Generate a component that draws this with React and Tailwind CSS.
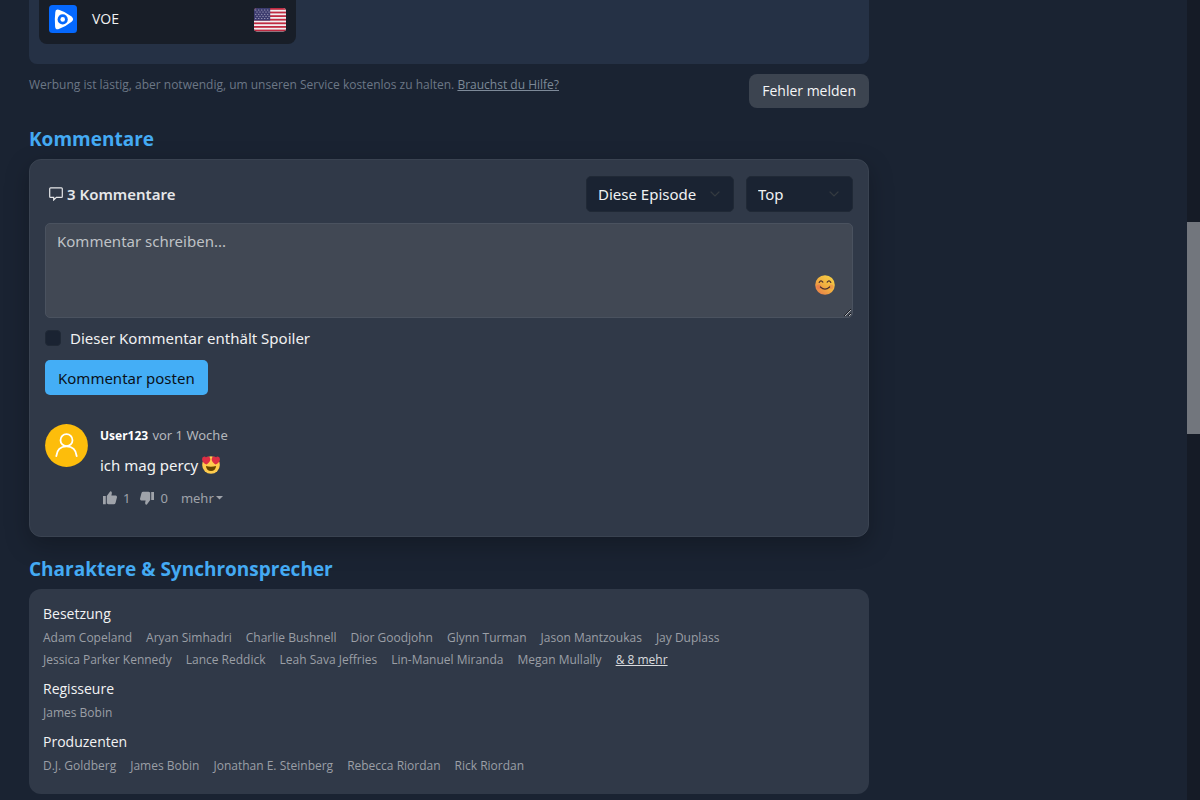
import React from "react";

function VoeLogo() {
  return (
    <svg className="size-7 shrink-0" viewBox="0 0 28 28" aria-hidden="true">
      <rect width="28" height="28" rx="3.5" fill="#0568fd" />
      <path
        d="M6.3 7.2Q6.4 3.6 9.8 4.8Q16.5 6.8 22.6 11.4Q25.6 14.2 22.6 16.8Q16.5 21.8 9.8 24.1Q6.4 25 6.1 21.4Q5.4 14.3 6.3 7.2Z"
        fill="#fff"
      />
      <circle cx="13.7" cy="14.4" r="5.1" fill="#0568fd" />
      <circle cx="13.7" cy="14.4" r="2.3" fill="#fff" />
    </svg>
  );
}

function UsFlag() {
  const stripes = [0, 2, 4, 6, 8, 10, 12];
  const stars = [];
  for (let row = 0; row < 5; row++) {
    for (let col = 0; col < 5; col++) {
      stars.push([1.8 + col * 3 + (row % 2) * 1.2, 1.7 + row * 2.1]);
    }
  }
  return (
    <svg className="h-6 w-8 shrink-0" viewBox="0 0 32 24" role="img" aria-label="Englisch">
      <defs>
        <clipPath id="flag-clip">
          <rect width="32" height="23.4" rx="3" />
        </clipPath>
      </defs>
      <g clipPath="url(#flag-clip)">
        <rect width="32" height="24" fill="#f1eef0" />
        {stripes.map((i) => (
          <rect key={i} y={i * 1.8} width="32" height="1.8" fill="#bf2a41" />
        ))}
        <rect width="16.2" height="12.6" fill="#3c3b6e" />
        {stars.map(([x, y], i) => (
          <circle key={i} cx={x} cy={y + 0.3} r="0.5" fill="#d8d8e6" />
        ))}
      </g>
    </svg>
  );
}

function SmileEmoji() {
  return (
    <svg className="size-5" viewBox="0 0 20 20" aria-hidden="true">
      <defs>
        <linearGradient id="smile" x1="0.9" y1="0.1" x2="0.2" y2="1">
          <stop offset="0" stopColor="#f6cf45" />
          <stop offset="0.5" stopColor="#f1b040" />
          <stop offset="1" stopColor="#e87f4a" />
        </linearGradient>
      </defs>
      <circle cx="10" cy="10" r="9.8" fill="url(#smile)" />
      <circle cx="3.8" cy="11.8" r="2.4" fill="#e8644f" opacity="0.45" />
      <circle cx="16.2" cy="11.8" r="2.4" fill="#e8644f" opacity="0.35" />
      <path
        d="M4.2 7.4Q6 4.6 7.8 7.2M12.2 7.2Q14 4.6 15.8 7.4M5.4 12Q10 16.4 14.6 12"
        fill="none"
        stroke="#4b3030"
        strokeWidth="1.2"
        strokeLinecap="round"
      />
    </svg>
  );
}

function HeartEyesEmoji() {
  return (
    <svg className="size-[18px]" viewBox="0 0 18 18" role="img" aria-label="Herzaugen">
      <circle cx="9" cy="9" r="8.8" fill="#ffcc4d" />
      <path d="M3.9 10Q9 11.4 14.1 10Q13.5 15 9 15Q4.5 15 3.9 10Z" fill="#664500" />
      <path
        d="M8.2 2.6A2.3 2.3 0 0 0 4.1 1.4A2.3 2.3 0 0 0 .1 2.9C-.3 5.4 2 7.5 4.5 8.4C6.6 7 8.9 4.8 8.2 2.6ZM9.8 2.6A2.3 2.3 0 0 1 13.9 1.4A2.3 2.3 0 0 1 17.9 2.9C18.3 5.4 16 7.5 13.5 8.4C11.4 7 9.1 4.8 9.8 2.6Z"
        fill="#dd2e44"
      />
    </svg>
  );
}

function Thumb({ down }) {
  return (
    <svg className="size-[14px]" viewBox="0 0 14 14" aria-hidden="true" fill="#9fa3aa">
      {down ? (
        <path d="M11.2 1H14V9H11.2ZM10.2 1.4V9L6.9 13.6Q5.2 14.1 5.1 12.1L5.6 9.4H1.2Q-.1 9.2 0 7.7L1.5 1.9Q1.8.7 3.2.7H8.6Z" />
      ) : (
        <path d="M0 5H2.8V13.3H0ZM3.8 12.6V5L7.1.4Q8.8-.1 8.9 1.9L8.4 4.6H12.8Q14.1 4.8 14 6.3L12.5 12.1Q12.2 13.3 10.8 13.3H5.4Z" />
      )}
    </svg>
  );
}

function Dropdown({ id, label, option, width }) {
  return (
    <div className={"grid items-center " + width}>
      <label htmlFor={id} className="sr-only">
        {label}
      </label>
      <select
        id={id}
        className="col-start-1 row-start-1 h-9 w-full appearance-none rounded-[5px] border border-[#202936] bg-[#1a2332] px-[11px] text-[15px] leading-6 text-[#f0f1f2]"
      >
        <option>{option}</option>
      </select>
      <svg
        className="pointer-events-none col-start-1 row-start-1 mr-[14px] size-[10px] justify-self-end"
        viewBox="0 0 10 10"
        aria-hidden="true"
      >
        <path d="M1 3L5 7L9 3" fill="none" stroke="#343a40" strokeWidth="1.2" strokeLinecap="round" />
      </svg>
    </div>
  );
}

const credits = [
  {
    title: "Besetzung",
    people: [
      "Adam Copeland",
      "Aryan Simhadri",
      "Charlie Bushnell",
      "Dior Goodjohn",
      "Glynn Turman",
      "Jason Mantzoukas",
      "Jay Duplass",
      "Jessica Parker Kennedy",
      "Lance Reddick",
      "Leah Sava Jeffries",
      "Lin-Manuel Miranda",
      "Megan Mullally",
    ],
    more: "& 8 mehr",
  },
  { title: "Regisseure", people: ["James Bobin"] },
  {
    title: "Produzenten",
    people: ["D.J. Goldberg", "James Bobin", "Jonathan E. Steinberg", "Rebecca Riordan", "Rick Riordan"],
  },
];

function Comments() {
  return (
    <section>
      <h2 className="mt-[15px] text-[19px] leading-8 font-bold text-[#44aaf3]">Kommentare</h2>
      <div className="mt-1 rounded-xl border border-[#3a4351] bg-[#303948] px-[15px] pt-4 pb-7 font-['Noto_Sans',sans-serif] shadow-[0_8px_24px_rgba(0,0,0,0.25)]">
        <div className="flex items-center gap-3">
          <h3 className="ml-1 flex grow items-center gap-1 text-[15px] leading-6 font-semibold text-[#e6e7e9]">
            <svg className="size-[14px]" viewBox="0 0 14 14" aria-hidden="true">
              <path
                d="M1.6.8H12.4Q13.3.8 13.3 1.7V9.5Q13.3 10.4 12.4 10.4H7.4L4.7 13V10.4H1.6Q.7 10.4.7 9.5V1.7Q.7.8 1.6.8Z"
                fill="none"
                stroke="#e6e7e9"
                strokeWidth="1.2"
              />
            </svg>
            3 Kommentare
          </h3>
          <Dropdown id="scope" label="Bereich" option="Diese Episode" width="w-[148px]" />
          <Dropdown id="sort" label="Sortierung" option="Top" width="w-[107px]" />
        </div>
        <form onSubmit={(e) => e.preventDefault()}>
          <div className="relative mt-[11px]">
            <label htmlFor="comment" className="sr-only">
              Kommentar
            </label>
            <textarea
              id="comment"
              placeholder="Kommentar schreiben..."
              className="block h-[95px] w-full resize-y rounded-[5px] border border-[#4a525f] bg-[#414854] px-[11px] py-[5px] text-[15px] leading-6 text-white placeholder:text-[#bfc2c6]"
            />
            <button type="button" aria-label="Emoji" className="absolute right-[18px] bottom-[23px]">
              <SmileEmoji />
            </button>
          </div>
          <div className="mt-2 flex items-center gap-[9px]">
            <input
              id="spoiler"
              type="checkbox"
              className="size-4 appearance-none rounded-[4px] border border-[#202936] bg-[#1a2332]"
            />
            <label htmlFor="spoiler" className="text-[15px] leading-6 text-[#f0f1f2]">
              Dieser Kommentar enthält Spoiler
            </label>
          </div>
          <button
            type="submit"
            className="mt-[10px] block h-[35px] rounded-[5px] bg-[#44aef6] px-[13px] text-[15px] leading-6 text-[#0a1119]"
          >
            Kommentar posten
          </button>
        </form>
        <article className="mt-[29px] flex gap-3">
          <svg className="size-[43px] shrink-0" viewBox="0 0 43 43" aria-hidden="true">
            <circle cx="21.5" cy="21.5" r="21.4" fill="#fdbd0b" />
            <g fill="none" stroke="#fff" strokeWidth="1.8" strokeLinecap="round">
              <circle cx="21.5" cy="16.2" r="6" />
              <path d="M11.3 32.2C12 25.3 16 22.4 21.5 22.4S31 25.3 31.7 32.2" />
            </g>
          </svg>
          <div>
            <p className="leading-5">
              <span className="text-xs font-bold text-white">User123</span>{" "}
              <span className="text-[13px] text-[#b4b7bc]">vor 1 Woche</span>
            </p>
            <p className="mt-2 flex items-center gap-1 text-[15px] leading-6 text-[#f2f3f4]">
              ich mag percy <HeartEyesEmoji />
            </p>
            <div className="mt-[11px] ml-[3px] flex items-center gap-[10px] text-[13px] leading-5 text-[#9fa3aa]">
              <button type="button" aria-label="Gefällt mir" className="flex items-center gap-[6px]">
                <Thumb /> 1
              </button>
              <button type="button" aria-label="Gefällt mir nicht" className="flex items-center gap-[6px]">
                <Thumb down /> 0
              </button>
              <button type="button" className="ml-[3px] flex items-center gap-[2px]">
                mehr
                <svg className="h-1 w-[7px]" viewBox="0 0 7 4" aria-hidden="true">
                  <path d="M0 0H7L3.5 3.6Z" fill="#9fa3aa" />
                </svg>
              </button>
            </div>
          </div>
        </article>
      </div>
    </section>
  );
}

function Credits() {
  return (
    <section>
      <h2 className="mt-4 text-[19px] leading-8 font-bold text-[#44aaf3]">Charaktere &amp; Synchronsprecher</h2>
      <div className="mt-1 flex flex-col gap-[6px] rounded-xl bg-[#303948] px-[14px] pt-[13px] pb-[17px]">
        {credits.map((group) => (
          <div key={group.title}>
            <h3 className="text-sm leading-6 text-[#f2f3f4]">{group.title}</h3>
            <ul className="mt-px mr-[100px] flex flex-wrap gap-x-[14px] text-xs leading-[22px] text-[#9b9fa6]">
              {group.people.map((name) => (
                <li key={name}>
                  <a href="#person">{name}</a>
                </li>
              ))}
              {group.more && (
                <li>
                  <a href="#more" className="text-[#d9dbde] underline">
                    {group.more}
                  </a>
                </li>
              )}
            </ul>
          </div>
        ))}
      </div>
    </section>
  );
}

export default function App() {
  return (
    <div className="flex min-h-screen bg-[#1a2332] font-['Open_Sans','Noto_Sans',sans-serif]">
      <main className="grow pb-[5px] pl-[29px]">
        <div className="max-w-[840px]">
          <div className="rounded-b-lg bg-[#253145] px-[10px] pb-5">
            <button
              type="button"
              className="flex h-11 w-[257px] items-start rounded-b-lg bg-[#181e28] px-[10px] pt-[5px] text-sm leading-7 text-[#f0f1f2]"
            >
              <VoeLogo />
              <span className="ml-[15px] grow text-left">VOE</span>
              <span className="mt-[3px]">
                <UsFlag />
              </span>
            </button>
          </div>
          <div className="mt-[10px] flex items-start justify-between">
            <p className="text-xs leading-[22px] text-[#6c7786]">
              Werbung ist lästig, aber notwendig, um unseren Service kostenlos zu halten.{" "}
              <a href="#help" className="text-[#7d8998] underline">
                Brauchst du Hilfe?
              </a>
            </p>
            <button type="button" className="h-[34px] rounded-lg bg-[#3c4450] px-[13px] text-sm text-[#f5f6f7]">
              Fehler melden
            </button>
          </div>
          <Comments />
          <Credits />
        </div>
      </main>
      <div className="w-[13px] shrink-0 bg-[#151b26] pt-[222px]" aria-hidden="true">
        <div className="h-[212px] bg-[#72767d]" />
      </div>
    </div>
  );
}
